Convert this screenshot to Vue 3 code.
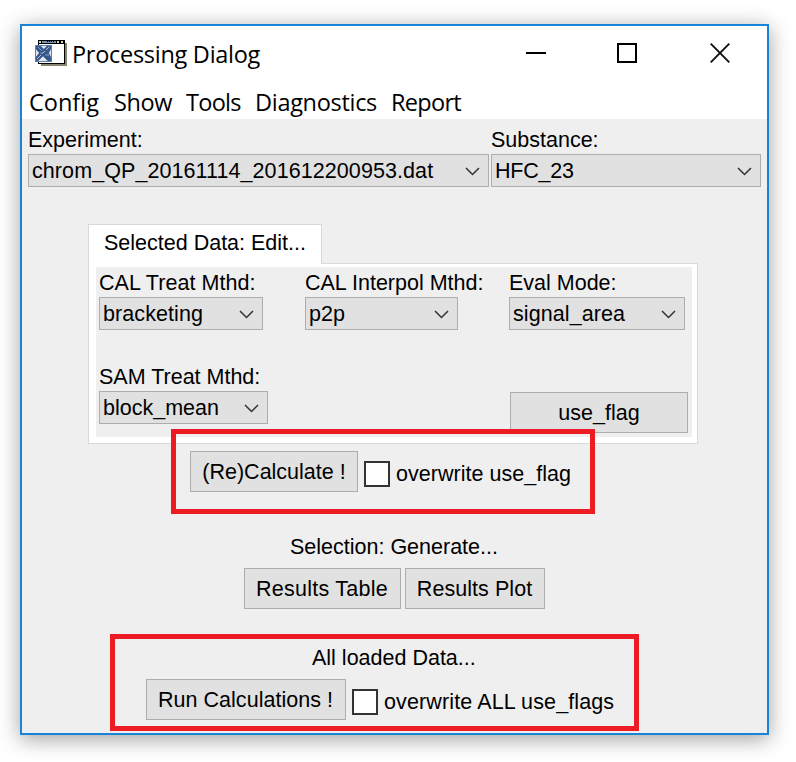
<script setup>
const menus = [
  { label: 'Config', cls: 'm-config' },
  { label: 'Show', cls: 'm-show' },
  { label: 'Tools', cls: 'm-tools' },
  { label: 'Diagnostics', cls: 'm-diagnostics' },
  { label: 'Report', cls: 'm-report' },
]
const files = [
  { label: 'Experiment:', value: 'chrom_QP_20161114_201612200953.dat', cls: 'experiment' },
  { label: 'Substance:', value: 'HFC_23', cls: 'substance' },
]
const methods = [
  { label: 'CAL Treat Mthd:', value: 'bracketing', cls: 'cal-treat' },
  { label: 'CAL Interpol Mthd:', value: 'p2p', cls: 'cal-interpol' },
  { label: 'Eval Mode:', value: 'signal_area', cls: 'eval-mode' },
]
</script>

<template>
  <main class="desktop">
    <section class="window">
      <header class="titlebar">
        <svg class="app-icon" width="32" height="27" viewBox="0 0 32 27" shape-rendering="crispEdges">
          <path d="M6 3h26v23H6z" fill="#89846f" />
          <path d="M3 0h27v24H3z" fill="#000" />
          <path d="M4 4h25v19H4z" fill="#fff" />
          <path d="M4 1h25v2H4z" fill="#7593b5" />
          <path d="M4 1h2v2H4zM22 1h2v2h-2zM26 1h2v2h-2z" fill="#d8d2b8" />
          <path d="M6 1h1v2H6zM21 1h1v2h-1zM24 1h2v2h-2zM28 1h1v2h-1zM12 1h1v1h-1zM14 1h1v1h-1zM16 1h1v1h-1zM18 1h1v1h-1z" fill="#000" />
          <path d="M0 5h17v17H0z" fill="#5f80a8" />
          <path d="M1 6h15v15H1z" fill="#3a5f90" />
          <g fill="none" shape-rendering="auto">
            <path d="M6 6h6L9 9zM1 9l3 4-3 4zM16 9l-2 4 2 4zM3 21l5-5 5 5z" fill="#e3e6ea" />
            <path d="M2 7l13 13M14 7L2 19" stroke="#34568a" stroke-width="4" />
            <path d="M2 19l4-4M7 14l3-3M11 10l3-3" stroke="#b4c3d6" stroke-width="1" />
            <path d="M3 7l4 4M5 13h3M10 15h4" stroke="#7f9dc0" stroke-width="1" />
          </g>
        </svg>
        <h1 class="title">Processing Dialog</h1>
        <div class="controls">
          <svg width="20" height="20" viewBox="0 0 20 20"><path d="M0 10h20" stroke="#000" stroke-width="2" /></svg>
          <svg width="20" height="20" viewBox="0 0 20 20"><path d="M1 1h18v18H1z" fill="none" stroke="#000" stroke-width="2" /></svg>
          <svg width="20" height="20" viewBox="0 0 20 20"><path d="M.7.7l18.600 18.600M19.300.7L.7 19.300" stroke="#111" stroke-width="1.900" /></svg>
        </div>
      </header>

      <nav class="menubar">
        <span v-for="m in menus" :key="m.label" class="menu" :class="m.cls">{{ m.label }}</span>
      </nav>

      <div class="content">
        <div class="files">
          <div v-for="f in files" :key="f.label" class="field" :class="f.cls">
            <span class="label">{{ f.label }}</span>
            <div class="select">
              <span>{{ f.value }}</span>
              <svg width="15" height="9" viewBox="0 0 15 9"><path d="M1 1l6.500 6.500L14 1" /></svg>
            </div>
          </div>
        </div>

        <div class="tabs">
          <div class="tab">Selected Data: Edit...</div>
          <div class="panel">
            <div class="panel-body">
              <div class="methods">
                <div v-for="f in methods" :key="f.label" class="field" :class="f.cls">
                  <span class="label">{{ f.label }}</span>
                  <div class="select">
                    <span>{{ f.value }}</span>
                    <svg width="15" height="9" viewBox="0 0 15 9"><path d="M1 1l6.500 6.500L14 1" /></svg>
                  </div>
                </div>
              </div>
              <div class="second-row">
                <div class="field sam-treat">
                  <span class="label">SAM Treat Mthd:</span>
                  <div class="select">
                    <span>block_mean</span>
                    <svg width="15" height="9" viewBox="0 0 15 9"><path d="M1 1l6.500 6.500L14 1" /></svg>
                  </div>
                </div>
                <button class="btn use-flag">use_flag</button>
              </div>
            </div>
          </div>
        </div>

        <div class="recalc">
          <button class="btn b-recalc">(Re)Calculate !</button>
          <label class="check"><i class="box"></i><span>overwrite use_flag</span></label>
          <div class="mark mark-recalc"></div>
        </div>

        <div class="caption c-selection">Selection: Generate...</div>
        <div class="results">
          <button class="btn b-table">Results Table</button>
          <button class="btn b-plot">Results Plot</button>
        </div>

        <div class="all-data">
          <div class="caption c-all">All loaded Data...</div>
          <div class="run">
            <button class="btn b-run">Run Calculations !</button>
            <label class="check"><i class="box"></i><span>overwrite ALL use_flags</span></label>
          </div>
          <div class="mark mark-all"></div>
        </div>
      </div>
    </section>
  </main>
</template>

<style>
body {
  background: #fff;
}
</style>

<style scoped>
.desktop {
  box-sizing: border-box;
  width: 796px;
  height: 762px;
  padding: 24px 27px 27px 20px;
  overflow: hidden;
  background: #fff;
}
.window {
  box-sizing: border-box;
  width: 749px;
  height: 711px;
  border: 2px solid #1883d7;
  background: #fff;
  box-shadow: 0 4px 20px rgba(0, 0, 0, 0.38);
  display: flex;
  flex-direction: column;
  color: #000;
  font: 21.5px/24px "Liberation Sans", Arial, sans-serif;
  white-space: nowrap;
}
.titlebar {
  height: 61px;
  display: flex;
  align-items: flex-start;
  padding-left: 13px;
}
.app-icon {
  margin-top: 14px;
  flex: none;
}
.title {
  margin: 12px 0 0 5px;
  width: 199px;
  font: 400 23.5px/32px "Open Sans", "Noto Sans", sans-serif;
  letter-spacing: -0.28px;
}
.controls {
  display: flex;
  gap: 71px;
  margin: 17px 0 0 255px;
}
.controls svg:last-child {
  margin-left: 2px;
}
.menubar {
  height: 32px;
  display: flex;
  padding-left: 7px;
  font: 23.5px/31px "Open Sans", "Noto Sans", sans-serif;
  letter-spacing: -0.3px;
}
.m-config { width: 85px; letter-spacing: 0; }
.m-show { width: 72px; letter-spacing: -0.4px; }
.m-tools { width: 69px; letter-spacing: -0.7px; }
.m-diagnostics { width: 136px; }
.m-report { letter-spacing: -0.7px; }
.content {
  flex: 1;
  background: #efefef;
  padding: 9px 6px 0;
}
.field {
  display: flex;
  flex-direction: column;
  gap: 2px;
}
.label {
  height: 24px;
}
.select {
  box-sizing: border-box;
  height: 33px;
  border: 1px solid #adadad;
  background: #e1e1e1;
  display: flex;
  justify-content: space-between;
  align-items: center;
  padding: 1px 8px 0 3px;
  letter-spacing: 0.08px;
}
.select svg {
  fill: none;
  stroke: #333;
  stroke-width: 1.5;
}
.files {
  display: flex;
  gap: 2px;
}
.experiment { width: 461px; }
.substance { width: 270px; }
.substance .select { letter-spacing: -0.2px; }
.tabs {
  margin: 37px 0 0 60px;
  width: 610px;
}
.tab {
  box-sizing: border-box;
  width: 234px;
  height: 40px;
  border: 1px solid #d9d9d9;
  border-bottom: 0;
  background: #fff;
  padding: 6px 0 0 15px;
  position: relative;
  z-index: 1;
}
.panel {
  box-sizing: border-box;
  height: 181px;
  margin-top: -1px;
  border: 1px solid #d9d9d9;
  background: #fff;
  padding: 3px 5px 6px 7px;
}
.panel-body {
  box-sizing: border-box;
  height: 170px;
  background: #efefef;
  padding: 4px 4px 0 3px;
}
.methods {
  display: flex;
}
.cal-treat { width: 164px; margin-right: 42px; }
.cal-interpol { width: 153px; margin-right: 51px; }
.eval-mode { width: 176px; }
.second-row {
  display: flex;
  justify-content: space-between;
  align-items: flex-start;
  margin-top: 35px;
}
.sam-treat { width: 169px; }
.cal-treat .label {
  letter-spacing: 0.06px;
}
.sam-treat .select {
  letter-spacing: 0;
}
.btn {
  box-sizing: border-box;
  height: 41px;
  border: 1px solid #adadad;
  border-radius: 0;
  background: #e1e1e1;
  padding: 1px 0 0;
  color: #000;
  font: inherit;
}
.use-flag {
  width: 178px;
  margin-top: 27px;
}
.recalc {
  position: relative;
  display: flex;
  gap: 6px;
  margin: 7px 0 0 162px;
}
.b-recalc { width: 168px; }
.check {
  display: flex;
  gap: 6px;
  padding-top: 10px;
  letter-spacing: 0.03px;
}
.run .check {
  letter-spacing: 0.12px;
}
.check span {
  padding-top: 1px;
}
.box {
  box-sizing: border-box;
  width: 26px;
  height: 26px;
  border: 2px solid #333;
  background: #fff;
}
.mark {
  position: absolute;
  box-sizing: border-box;
  border: 5px solid #ed1c24;
  pointer-events: none;
}
.mark-recalc {
  left: -19px;
  top: -22px;
  width: 424px;
  height: 85px;
  z-index: 2;
}
.c-selection {
  margin: 43px 0 0 262px;
}
.results {
  display: flex;
  gap: 4px;
  margin: 9px 0 0 216px;
}
.b-table {
  width: 157px;
  letter-spacing: 0.25px;
  padding-right: 1px;
}
.b-plot {
  width: 140px;
  letter-spacing: 0.05px;
  padding-right: 1px;
}
.all-data {
  position: relative;
  margin: 37px 0 0 118px;
}
.c-all {
  padding-left: 166px;
}
.run {
  display: flex;
  gap: 6px;
  margin-top: 9px;
}
.b-run {
  width: 200px;
  letter-spacing: 0.03px;
  padding-right: 1px;
}
.mark-all {
  left: -36px;
  top: -12px;
  width: 529px;
  height: 97px;
}
</style>
